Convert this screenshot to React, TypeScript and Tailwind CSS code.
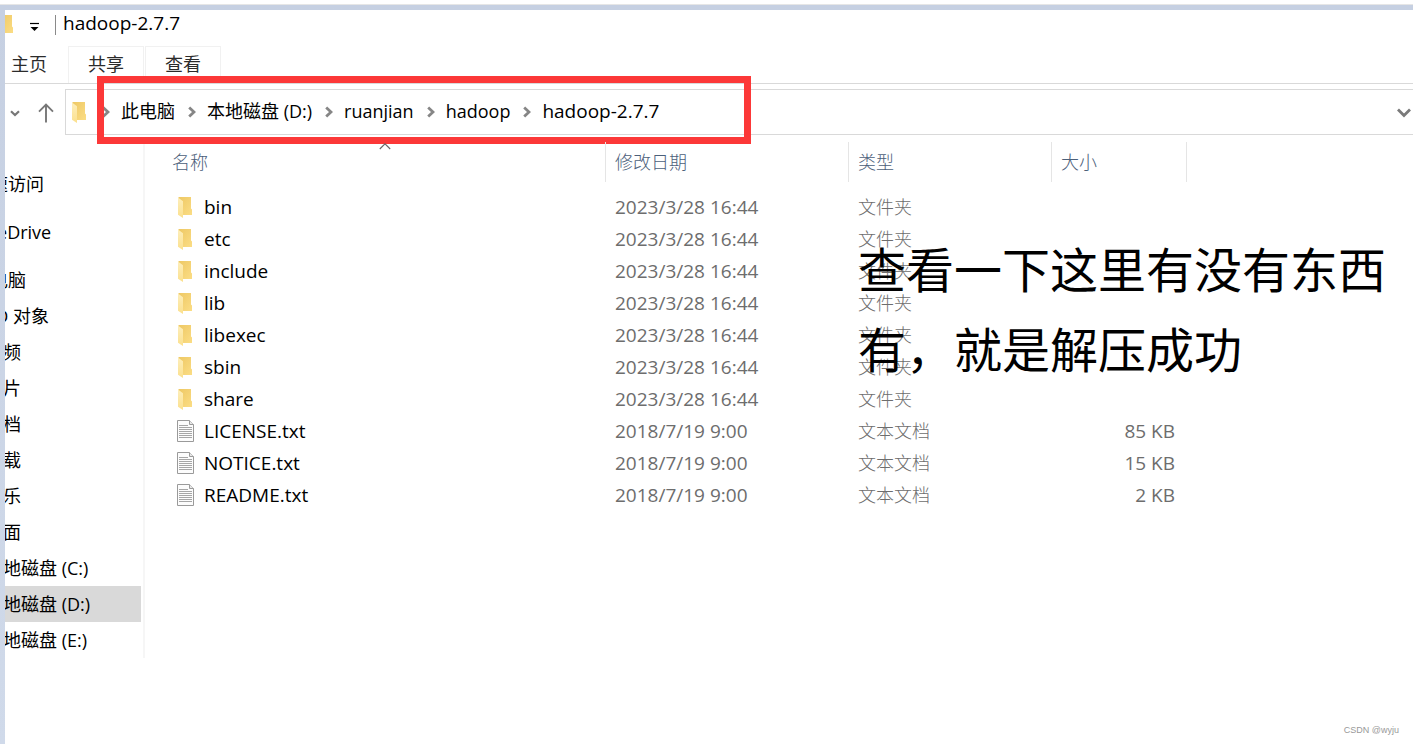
import { Fragment } from "react";

type Entry = { name: string; date: string; kind: "folder" | "text"; size?: string };

const entries: Entry[] = [
  { name: "bin", date: "2023/3/28 16:44", kind: "folder" },
  { name: "etc", date: "2023/3/28 16:44", kind: "folder" },
  { name: "include", date: "2023/3/28 16:44", kind: "folder" },
  { name: "lib", date: "2023/3/28 16:44", kind: "folder" },
  { name: "libexec", date: "2023/3/28 16:44", kind: "folder" },
  { name: "sbin", date: "2023/3/28 16:44", kind: "folder" },
  { name: "share", date: "2023/3/28 16:44", kind: "folder" },
  { name: "LICENSE.txt", date: "2018/7/19 9:00", kind: "text", size: "85 KB" },
  { name: "NOTICE.txt", date: "2018/7/19 9:00", kind: "text", size: "15 KB" },
  { name: "README.txt", date: "2018/7/19 9:00", kind: "text", size: "2 KB" },
];

const crumbs = ["此电脑", "本地磁盘 (D:)", "ruanjian", "hadoop", "hadoop-2.7.7"];

const places = ["3D 对象", "视频", "图片", "文档", "下载", "音乐", "桌面", "本地磁盘 (C:)", "本地磁盘 (D:)", "本地磁盘 (E:)"];

function FolderIcon() {
  return (
    <svg className="block h-[24px] w-[17px]" viewBox="-1 -2 17 24" aria-hidden="true">
      <defs>
        <linearGradient id="folderBack" x1="0" x2="1" y1="0" y2="1">
          <stop offset="0" stopColor="#eec864" />
          <stop offset="1" stopColor="#fbdd85" />
        </linearGradient>
        <linearGradient id="folderFlap" x1="0" x2="0" y1="0" y2="1">
          <stop offset="0" stopColor="#fdeebb" />
          <stop offset="1" stopColor="#fbe08d" />
        </linearGradient>
      </defs>
      <path d="M0.5 0H13V11.5L14 12.5V18H4.5L0.5 16Z" fill="url(#folderBack)" />
      <path d="M0 0.5L5 4.2V21L0 17.8Z" fill="url(#folderFlap)" />
    </svg>
  );
}

function TextFileIcon() {
  return (
    <svg className="block h-[22px] w-[17px]" viewBox="0 0 17 22" aria-hidden="true">
      <path d="M0.5 0.5H12.5L16.5 4.5V21.5H0.5Z" fill="#fcfcfc" stroke="#9a9a9a" />
      <path d="M12.5 0.5V4.5H16.5" fill="#e8e8e8" stroke="#9a9a9a" />
      <path
        d="M2 5.5H11M2 7.5H15M2 9.5H15M2 11.5H15M2 13.5H15M2 15.5H15M2 17.5H15"
        stroke="#a6a6a6"
        strokeWidth="1"
      />
    </svg>
  );
}

function CrumbChevron() {
  return (
    <svg className="block h-[12px] w-[8px] shrink-0" viewBox="0 0 8 12" fill="none" aria-hidden="true">
      <path d="M1.2 1.5L6 6L1.2 10.5" stroke="#868686" strokeWidth="2.8" />
    </svg>
  );
}

export default function App() {
  return (
    <div className="flex min-h-screen flex-col bg-white pt-1 font-['Open_Sans','Noto_Sans_CJK_SC',sans-serif] text-[19px] leading-6 text-black">
      <div className="flex grow border-t border-[#e6e6e6] bg-linear-to-b from-[#c6d0e2] to-[#d0daea] pt-[5px] pl-[5px]">
        <div className="relative flex min-w-0 grow flex-col bg-white">
          <header className="flex h-9 items-start overflow-hidden pt-px">
            <div className="-ml-[7px] mt-[2px]">
              <FolderIcon />
            </div>
            <button type="button" aria-label="自定义快速访问工具栏" className="mt-[11px] ml-[14px]">
              <svg className="block h-[10px] w-[11px]" viewBox="0 0 11 10" aria-hidden="true">
                <path d="M1 1.5H10" stroke="#000" strokeWidth="1.2" />
                <path d="M1.5 5H9.5L5.5 9Z" fill="#000" />
              </svg>
            </button>
            <span className="mt-[4px] ml-[15px] h-5 border-l border-[#8a8a8a]" />
            <h1 className="ml-[7px]">hadoop-2.7.7</h1>
          </header>

          <nav className="flex h-[38px] border-b border-[#d9d9d9] text-[18px] text-[#2b2b2b]" aria-label="功能区">
            <button type="button" className="w-[63px] pr-[15px] pb-[2px]">主页</button>
            <button type="button" className="w-[76px] border-x border-t border-[#f1f1f1] pb-[2px]">共享</button>
            <button type="button" className="ml-px w-[76px] border-x border-t border-[#f1f1f1] pb-[2px]">查看</button>
          </nav>

          <div className="flex pt-[5px] pb-[7px]">
            <div className="flex w-[60px] items-center pt-[2px]">
              <button type="button" aria-label="最近浏览的位置" className="ml-[5px]">
                <svg className="block h-[7px] w-[10px]" viewBox="0 0 10 7" fill="none" aria-hidden="true">
                  <path d="M1 1.2L5 5L9 1.2" stroke="#777" strokeWidth="2.2" />
                </svg>
              </button>
              <button type="button" aria-label="向上一级" className="ml-[18px]">
                <svg className="block h-[20px] w-[16px]" viewBox="0 0 16 20" fill="none" aria-hidden="true">
                  <path d="M8 19.5V1.8M1 8.6L8 1.6L15 8.6" stroke="#777" strokeWidth="1.9" />
                </svg>
              </button>
            </div>
            <div className="relative flex h-[46px] grow items-center border-y border-l border-[#d9d9d9] pl-[5px]">
              <div className="w-[31px]">
                <FolderIcon />
              </div>
              {crumbs.map((crumb, i) => (
                <Fragment key={crumb}>
                  <CrumbChevron />
                  <button
                    type="button"
                    className={
                      i === crumbs.length - 1
                        ? "mr-[13px] ml-[11px] pb-[2px] whitespace-nowrap"
                        : "mr-[13px] ml-[11px] pb-[2px] text-[18px] whitespace-nowrap"
                    }
                  >
                    {crumb}
                  </button>
                </Fragment>
              ))}
              <button type="button" aria-label="以前的位置" className="mr-[2px] ml-auto pt-[2px]">
                <svg className="block h-[10px] w-[14px]" viewBox="0 0 14 10" fill="none" aria-hidden="true">
                  <path d="M1 1.5L7 7.5L13 1.5" stroke="#7a7a7a" strokeWidth="2.8" />
                </svg>
              </button>
              <div className="pointer-events-none absolute -top-[14px] left-[31px] h-[68px] w-[654px] border-7 border-[#fc3838]" />
            </div>
          </div>

          <div className="flex items-start">
            <nav className="w-[140px] shrink-0 overflow-hidden border-r-2 border-[#f6f6f6] pt-6 pr-[2px] text-[18px]" aria-label="导航窗格">
              <div className="-ml-[33px] whitespace-nowrap">
                <a href="#quick" className="mb-3 flex h-9 items-center">快速访问</a>
                <a href="#onedrive" className="mb-3 flex h-9 items-center">OneDrive</a>
                <a href="#pc" className="flex h-9 items-center">此电脑</a>
                {places.map((place) => (
                  <a
                    key={place}
                    href={`#${place}`}
                    className={
                      place === "本地磁盘 (D:)"
                        ? "flex h-9 items-center bg-[#d9d9d9] pl-[13px]"
                        : "flex h-9 items-center pl-[13px]"
                    }
                  >
                    {place}
                  </a>
                ))}
              </div>
            </nav>

            <main className="relative min-w-0 grow pl-[18px]">
              <table className="w-[1024px] table-fixed border-collapse text-left text-[#6d6d6d]">
                <colgroup>
                  <col className="w-[443px]" />
                  <col className="w-[243px]" />
                  <col className="w-[203px]" />
                  <col className="w-[135px]" />
                </colgroup>
                <thead className="text-[18px] text-[#4c607a]">
                  <tr>
                    {["名称", "修改日期", "类型", "大小"].map((label, i) => (
                      <th key={label} scope="col" className="relative p-0 pb-[9px] font-light">
                        <div className="flex h-10 items-center border-r border-[#e5e5e5] pl-[9px]">{label}</div>
                        {i === 0 && (
                          <svg className="absolute top-0 left-[216px] h-[8px] w-[12px]" viewBox="0 0 12 8" fill="none" aria-hidden="true">
                            <path d="M0.8 7L6 1.8L11.2 7" stroke="#666" strokeWidth="1.1" />
                          </svg>
                        )}
                      </th>
                    ))}
                  </tr>
                </thead>
                <tbody>
                  {entries.map((entry) => (
                    <tr key={entry.name} className="h-8">
                      <td className="p-0 text-black">
                        <div className="flex items-center pl-[14px]">
                          <span className="w-[27px]">{entry.kind === "folder" ? <FolderIcon /> : <TextFileIcon />}</span>
                          {entry.name}
                        </div>
                      </td>
                      <td className="p-0 pl-[9px]">{entry.date}</td>
                      <td className="p-0 pl-[9px] text-[18px] font-light">{entry.kind === "folder" ? "文件夹" : "文本文档"}</td>
                      <td className="p-0 pr-3 text-right">{entry.size}</td>
                    </tr>
                  ))}
                </tbody>
              </table>
              <p className="absolute top-[88px] left-[713px] text-[48px] leading-[80px] whitespace-nowrap text-black">
                查看一下这里有没有东西
                <br />
                有，就是解压成功
              </p>
            </main>
          </div>

          <footer className="mt-auto pr-[14px] pb-[6px] text-right font-['Liberation_Sans',sans-serif] text-[9px] leading-4 text-[#999]">
            CSDN @wyju
          </footer>
        </div>
      </div>
    </div>
  );
}
